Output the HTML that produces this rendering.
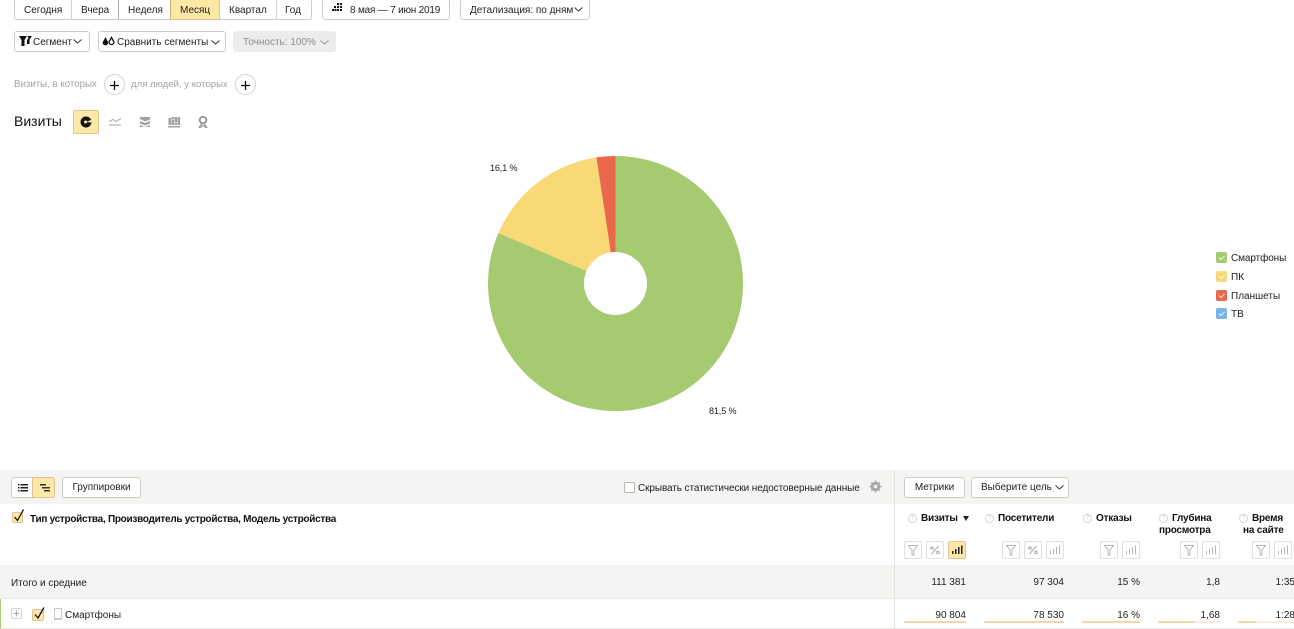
<!DOCTYPE html>
<html lang="ru"><head><meta charset="utf-8">
<style>
html,body{margin:0;padding:0;background:#fff}
body{width:1294px;height:629px;overflow:hidden;position:relative;font-family:"Liberation Sans",sans-serif;font-size:10px;color:#222}
.a{position:absolute;white-space:nowrap}
.b{position:absolute;box-sizing:border-box;background:#fff;border:1px solid #cfcdc8;border-radius:3px;height:21px;line-height:20px;text-align:center;white-space:nowrap}
.d{position:absolute;width:1px;background:#d5d3ce}
.bar{position:absolute;height:2px;background:#eed9ae}
.r{position:absolute;text-align:right;white-space:nowrap;font-size:10px;color:#222}
.h{position:absolute;font-weight:bold;font-size:10px;line-height:12px;color:#111;white-space:nowrap;letter-spacing:-.2px}
.q{position:absolute;box-sizing:border-box;width:9px;height:9px;border:1px solid #d6d6d6;border-radius:50%;font-size:6px;line-height:7px;text-align:center;color:#c4c4c4}
.ib{position:absolute;box-sizing:border-box;width:18px;height:18px;top:541px;border:1px solid #e2e1de;border-radius:2px;background:#fff}
.ib svg{position:absolute;left:2px;top:2px}
svg{display:block}
.lg{position:absolute;left:1216px;width:11px;height:11px;border-radius:2px}
.lg svg{position:absolute;left:0;top:0}
</style></head><body>

<!-- top row -->
<div class="b" style="left:14px;top:-1px;width:298px"></div>
<div class="d" style="left:71px;top:0;height:19px"></div>
<div class="d" style="left:118px;top:0;height:19px;background:#aaa"></div>
<div class="a" style="left:170px;top:-1px;width:50px;height:21px;background:#fde8a8;box-sizing:border-box;border:1px solid #d8c68e;border-left-color:#c9b67a"></div>
<div class="d" style="left:276px;top:0;height:19px"></div>
<div class="a" style="left:24px;top:5px">Сегодня</div>
<div class="a" style="left:81px;top:5px">Вчера</div>
<div class="a" style="left:128px;top:5px">Неделя</div>
<div class="a" style="left:180px;top:5px">Месяц</div>
<div class="a" style="left:229px;top:5px">Квартал</div>
<div class="a" style="left:285px;top:5px">Год</div>

<div class="b" style="left:322px;top:-1px;width:128px"></div>
<svg class="a" style="left:332px;top:3px" width="12" height="10"><path fill="#111" d="M5 0h2v2H5zM8 0h2v2H8zM2 3h2v2H2zM5 3h2v2H5zM8 3h2v2H8zM0 6h2v2H0zM2.500 6h2v2h-2zM5 6h2v2H5zM8 6h2v2H8z"/></svg>
<div class="a" style="left:350px;top:5px;letter-spacing:-.2px">8 мая — 7 июн 2019</div>
<div class="b" style="left:460px;top:-1px;width:130px"></div>
<div class="a" style="left:470px;top:5px">Детализация: по дням</div>
<svg class="a" style="left:574px;top:7px" width="9" height="5"><path d="M0.500 0.500L4.500 4L8.500 0.500" fill="none" stroke="#333"/></svg>

<!-- second row -->
<div class="b" style="left:14px;top:31px;width:76px"></div>
<svg class="a" style="left:19px;top:36px" width="13" height="10"><path fill="#111" d="M0 0h8L5.500 4v6h-3V4zM8.500 0H13l-2.500 3.500V8H8V4l1.500-2z"/></svg>
<div class="a" style="left:33px;top:37px">Сегмент</div>
<svg class="a" style="left:73px;top:39px" width="9" height="5"><path d="M0.500 0.500L4.500 4L8.500 0.500" fill="none" stroke="#333"/></svg>
<div class="b" style="left:98px;top:31px;width:128px"></div>
<svg class="a" style="left:102px;top:36px" width="13" height="10"><path fill="#111" d="M3.500 1L6 6a2.700 2.700 0 1 1-5.200 0z"/><path fill="#fff" stroke="#111" stroke-width="1.300" d="M9.500 1.500L12 6a2.500 2.500 0 1 1-5 0z"/></svg>
<div class="a" style="left:117px;top:37px">Сравнить сегменты</div>
<svg class="a" style="left:211px;top:40px" width="9" height="5"><path d="M0.500 0.500L4.500 4L8.500 0.500" fill="none" stroke="#333"/></svg>
<div class="a" style="left:233px;top:31px;width:103px;height:21px;background:#ececea;border-radius:3px"></div>
<div class="a" style="left:243px;top:37px;color:#8e8e8e">Точность: 100%</div>
<svg class="a" style="left:320px;top:40px" width="9" height="5"><path d="M0.500 0.500L4.500 4L8.500 0.500" fill="none" stroke="#999"/></svg>

<!-- filters -->
<div class="a" style="left:14px;top:79px;color:#a3a3a3;font-size:9.700px">Визиты, в которых</div>
<div class="a" style="left:104px;top:74px;width:21px;height:21px;box-sizing:border-box;border:1px solid #d5d3ce;border-radius:50%"></div>
<svg class="a" style="left:109px;top:80px" width="11" height="11"><path d="M5.500 1v9M1 5.500h9" stroke="#111" stroke-width="1.300"/></svg>
<div class="a" style="left:131px;top:79px;color:#a3a3a3;font-size:9.600px">для людей, у которых</div>
<div class="a" style="left:235px;top:74px;width:21px;height:21px;box-sizing:border-box;border:1px solid #d5d3ce;border-radius:50%"></div>
<svg class="a" style="left:240px;top:80px" width="11" height="11"><path d="M5.500 1v9M1 5.500h9" stroke="#111" stroke-width="1.300"/></svg>

<!-- chart type row -->
<div class="a" style="left:14px;top:113px;font-size:14px;color:#111">Визиты</div>
<div class="a" style="left:73px;top:110px;width:26px;height:24px;box-sizing:border-box;background:#fde8a8;border:1px solid #d8c68e;border-radius:2px"></div>
<svg class="a" style="left:80px;top:116px" width="12" height="12"><circle cx="6" cy="6" r="5.500" fill="#111"/><path d="M6 6L12 3.500L12 6.500z" fill="#fde8a8"/><circle cx="5.500" cy="6" r="1.500" fill="#fde8a8"/></svg>
<svg class="a" style="left:109px;top:117px" width="12" height="10"><path d="M0 4.500L4 2.500L7 4.500L12 1.500M0 8h12" fill="none" stroke="#a5a5a5"/></svg>
<svg class="a" style="left:139px;top:116px" width="12" height="12"><path d="M1 1h10v2.500L6 5.500L1 3zM1 5L6 7l5-2v2.500L6 9.500l-5-2zM1 9l5 2 5-2v2H1z" fill="#a0a0a0"/></svg>
<svg class="a" style="left:168px;top:116px" width="12" height="12"><path d="M0.500 2h2.500v7H0.500zM3.500 4h2.500v5H3.500zM3.500 1h2.500v2.500H3.500zM6.500 1h2.500v5H6.500zM6.500 6.500h2.500v2.500H6.500zM9.500 1h2.500v8H9.500zM0 10h12v1.500H0z" fill="#a0a0a0"/></svg>
<svg class="a" style="left:197px;top:115px" width="12" height="14"><circle cx="6" cy="5" r="3.300" fill="none" stroke="#9a9a9a" stroke-width="2"/><path d="M4 8.500L1 13h3l2-2 2 2h3L8 8.500L6 10.500z" fill="#a8a8a8"/></svg>

<!-- pie -->
<svg class="a" style="left:480px;top:148px" width="272" height="272" viewBox="480 148 272 272">
<path d="M615.500 283.500V156A127.500 127.500 0 1 1 498.500 232.900Z" fill="#a5ca70"/>
<path d="M615.500 283.500L498.500 232.900A127.500 127.500 0 0 1 596.400 157.400Z" fill="#f9d976"/>
<path d="M615.500 283.500L596.400 157.400A127.500 127.500 0 0 1 615.500 156Z" fill="#ec684c"/>
<circle cx="615.500" cy="283.500" r="31.500" fill="#fff"/>
</svg>
<div class="a" style="left:490px;top:163px;font-size:9px;letter-spacing:-.1px">16,1 %</div>
<div class="a" style="left:709px;top:406px;font-size:9px;letter-spacing:-.1px">81,5 %</div>

<!-- legend -->
<div class="lg" style="top:252px;background:#a5ca72"><svg width="11" height="11"><path d="M3 5.500L5 7.500L8.500 4" fill="none" stroke="#fff" stroke-opacity=".8"/></svg></div>
<div class="a" style="left:1231px;top:253px;letter-spacing:-.1px">Смартфоны</div>
<div class="lg" style="top:271px;background:#f9d976"><svg width="11" height="11"><path d="M3 5.500L5 7.500L8.500 4" fill="none" stroke="#fff" stroke-opacity=".8"/></svg></div>
<div class="a" style="left:1231px;top:272px">ПК</div>
<div class="lg" style="top:290px;background:#e8684e"><svg width="11" height="11"><path d="M3 5.500L5 7.500L8.500 4" fill="none" stroke="#fff" stroke-opacity=".8"/></svg></div>
<div class="a" style="left:1231px;top:291px">Планшеты</div>
<div class="lg" style="top:308px;background:#7cb3e6"><svg width="11" height="11"><path d="M3 5.500L5 7.500L8.500 4" fill="none" stroke="#fff" stroke-opacity=".8"/></svg></div>
<div class="a" style="left:1231px;top:309px">ТВ</div>

<!-- table toolbar -->
<div class="a" style="left:0;top:470px;width:1294px;height:34px;background:#f5f4f2"></div>
<div class="a" style="left:0;top:565px;width:1294px;height:33px;background:#f5f4f2"></div>
<div class="a" style="left:0;top:598px;width:1294px;height:1px;background:#e8e7e4"></div>
<div class="a" style="left:0;top:628px;width:1294px;height:1px;background:#e8e7e4"></div>
<div class="a" style="left:0;top:599px;width:1px;height:29px;background:#a5ca72"></div>
<div class="d" style="left:894px;top:470px;height:159px;background:#e3e2df"></div>

<div class="b" style="left:11px;top:477px;width:44px"></div>
<div class="a" style="left:32px;top:477px;width:23px;height:21px;box-sizing:border-box;background:#fde8a8;border:1px solid #d8c68e;border-radius:0 3px 3px 0"></div>
<svg class="a" style="left:18px;top:484px" width="10" height="8"><path d="M0 0h1.500v1.500H0zM2.500 0H10v1.500H2.500zM0 3h1.500v1.500H0zM2.500 3H10v1.500H2.500zM0 6h1.500v1.500H0zM2.500 6H10v1.500H2.500z" fill="#222"/></svg>
<svg class="a" style="left:40px;top:484px" width="10" height="8"><path d="M0 0h6v1.500H0zM2 3h8v1.500H2zM4 6h6v1.500H4z" fill="#333"/></svg>
<div class="b" style="left:62px;top:477px;width:79px">Группировки</div>

<div class="a" style="left:624px;top:482px;width:11px;height:11px;box-sizing:border-box;background:#fff;border:1px solid #b5b3ae;border-radius:2px"></div>
<div class="a" style="left:638px;top:483px;letter-spacing:-.1px">Скрывать статистически недостоверные данные</div>
<svg class="a" style="left:869px;top:480px" width="13" height="13" viewBox="0 0 13 13"><circle cx="6.500" cy="6.500" r="3.500" fill="none" stroke="#a9a9a9" stroke-width="2.600"/><path d="M6.500 0.500v12M0.500 6.500h12M2.300 2.300l8.400 8.400M10.700 2.300l-8.400 8.400" stroke="#a9a9a9" stroke-width="1.600"/><circle cx="6.500" cy="6.500" r="1.800" fill="#f5f4f2"/></svg>

<div class="b" style="left:904px;top:477px;width:61px">Метрики</div>
<div class="b" style="left:971px;top:477px;width:98px;text-align:left;padding-left:9px">Выберите цель</div>
<svg class="a" style="left:1055px;top:485px" width="9" height="5"><path d="M0.500 0.500L4.500 4L8.500 0.500" fill="none" stroke="#333"/></svg>

<!-- header left -->
<div class="a" style="left:12px;top:512px;width:11px;height:11px;box-sizing:border-box;background:#fbe7ae;border:1px solid #d8c68e;border-radius:2px"></div>
<svg class="a" style="left:12px;top:508px" width="13" height="14"><path d="M2.500 9L5.500 12.500L11.500 1.500" fill="none" stroke="#111" stroke-width="1.300"/></svg>
<div class="h" style="left:30px;top:514px;letter-spacing:-.28px">Тип устройства, Производитель устройства, Модель устройства</div>

<!-- metric headers -->
<div class="q" style="left:908px;top:514px">?</div>
<div class="h" style="left:921px;top:513px">Визиты</div>
<svg class="a" style="left:963px;top:516px" width="6" height="5"><path d="M0 0h6L3 5z" fill="#222"/></svg>
<div class="q" style="left:985px;top:514px">?</div>
<div class="h" style="left:998px;top:513px">Посетители</div>
<div class="q" style="left:1083px;top:514px">?</div>
<div class="h" style="left:1096px;top:513px">Отказы</div>
<div class="q" style="left:1159px;top:514px">?</div>
<div class="h" style="left:1172px;top:513px">Глубина</div>
<div class="h" style="left:1159px;top:525px">просмотра</div>
<div class="q" style="left:1239px;top:514px">?</div>
<div class="h" style="left:1252px;top:513px">Время</div>
<div class="h" style="left:1243px;top:525px">на сайте</div>

<!-- icon buttons -->
<div class="ib" style="left:904px"><svg width="12" height="12"><path d="M1.500 1.500h9L7 6v5H5V6z" fill="none" stroke="#b5b5b5"/></svg></div>
<div class="ib" style="left:926px"><svg width="12" height="12"><path d="M9.500 2L2.500 10" stroke="#aaa"/><circle cx="3" cy="4" r="1.300" fill="none" stroke="#aaa"/><circle cx="9" cy="8.500" r="1.300" fill="none" stroke="#aaa"/></svg></div>
<div class="ib" style="left:948px;background:#fde8a8;border-color:#d8c68e"><svg width="12" height="12"><path d="M1 7h1.500v3H1zM4 5h1.500v5H4zM7 3h1.500v7H7zM10 1.500h1.500V10H10z" fill="#222"/></svg></div>

<div class="ib" style="left:1002px"><svg width="12" height="12"><path d="M1.500 1.500h9L7 6v5H5V6z" fill="none" stroke="#b5b5b5"/></svg></div>
<div class="ib" style="left:1024px"><svg width="12" height="12"><path d="M9.500 2L2.500 10" stroke="#aaa"/><circle cx="3" cy="4" r="1.300" fill="none" stroke="#aaa"/><circle cx="9" cy="8.500" r="1.300" fill="none" stroke="#aaa"/></svg></div>
<div class="ib" style="left:1046px"><svg width="12" height="12"><path d="M1 7h1v3H1zM4 5h1v5H4zM7 3h1v7H7zM10 1.500h1V10h-1z" fill="#b5b5b5"/></svg></div>

<div class="ib" style="left:1100px"><svg width="12" height="12"><path d="M1.500 1.500h9L7 6v5H5V6z" fill="none" stroke="#b5b5b5"/></svg></div>
<div class="ib" style="left:1122px"><svg width="12" height="12"><path d="M1 7h1v3H1zM4 5h1v5H4zM7 3h1v7H7zM10 1.500h1V10h-1z" fill="#b5b5b5"/></svg></div>

<div class="ib" style="left:1180px"><svg width="12" height="12"><path d="M1.500 1.500h9L7 6v5H5V6z" fill="none" stroke="#b5b5b5"/></svg></div>
<div class="ib" style="left:1202px"><svg width="12" height="12"><path d="M1 7h1v3H1zM4 5h1v5H4zM7 3h1v7H7zM10 1.500h1V10h-1z" fill="#b5b5b5"/></svg></div>

<div class="ib" style="left:1252px"><svg width="12" height="12"><path d="M1.500 1.500h9L7 6v5H5V6z" fill="none" stroke="#b5b5b5"/></svg></div>
<div class="ib" style="left:1274px"><svg width="12" height="12"><path d="M1 7h1v3H1zM4 5h1v5H4zM7 3h1v7H7zM10 1.500h1V10h-1z" fill="#b5b5b5"/></svg></div>

<!-- totals -->
<div class="a" style="left:11px;top:578px">Итого и средние</div>
<div class="r" style="right:328px;top:577px">111 381</div>
<div class="r" style="right:230px;top:577px">97 304</div>
<div class="r" style="right:154px;top:577px">15 %</div>
<div class="r" style="right:74px;top:577px">1,8</div>
<div class="r" style="right:-1px;top:577px">1:35</div>

<!-- row -->
<div class="a" style="left:11px;top:608px;width:11px;height:11px;box-sizing:border-box;background:#fff;border:1px solid #d5d3ce;border-radius:2px"></div>
<svg class="a" style="left:13px;top:610px" width="7" height="7"><path d="M3.500 0.500v6M0.500 3.500h6" stroke="#aaa"/></svg>
<div class="a" style="left:32px;top:609px;width:12px;height:12px;box-sizing:border-box;background:#fbe7ae;border:1px solid #d8c68e;border-radius:2px"></div>
<svg class="a" style="left:33px;top:606px" width="13" height="14"><path d="M2 8.500L5 12L11 1.500" fill="none" stroke="#111" stroke-width="1.300"/></svg>
<div class="a" style="left:54px;top:608px;width:8px;height:12px;box-sizing:border-box;border:1px solid #c9c9c9;border-bottom-width:2px;border-radius:1px"></div>
<div class="a" style="left:65px;top:610px">Смартфоны</div>

<div class="r" style="right:328px;top:610px">90 804</div>
<div class="r" style="right:230px;top:610px">78 530</div>
<div class="r" style="right:154px;top:610px">16 %</div>
<div class="r" style="right:74px;top:610px">1,68</div>
<div class="r" style="right:-1px;top:610px">1:28</div>

<div class="bar" style="left:904px;top:621px;width:62px"></div>
<div class="bar" style="left:984px;top:621px;width:80px"></div>
<div class="bar" style="left:1082px;top:621px;width:58px"></div>
<div class="bar" style="left:1158px;top:621px;width:62px;background:#f8eeda"></div>
<div class="bar" style="left:1158px;top:621px;width:36px"></div>
<div class="bar" style="left:1238px;top:621px;width:56px;background:#f8eeda"></div>
<div class="bar" style="left:1238px;top:621px;width:18px"></div>

</body></html>
